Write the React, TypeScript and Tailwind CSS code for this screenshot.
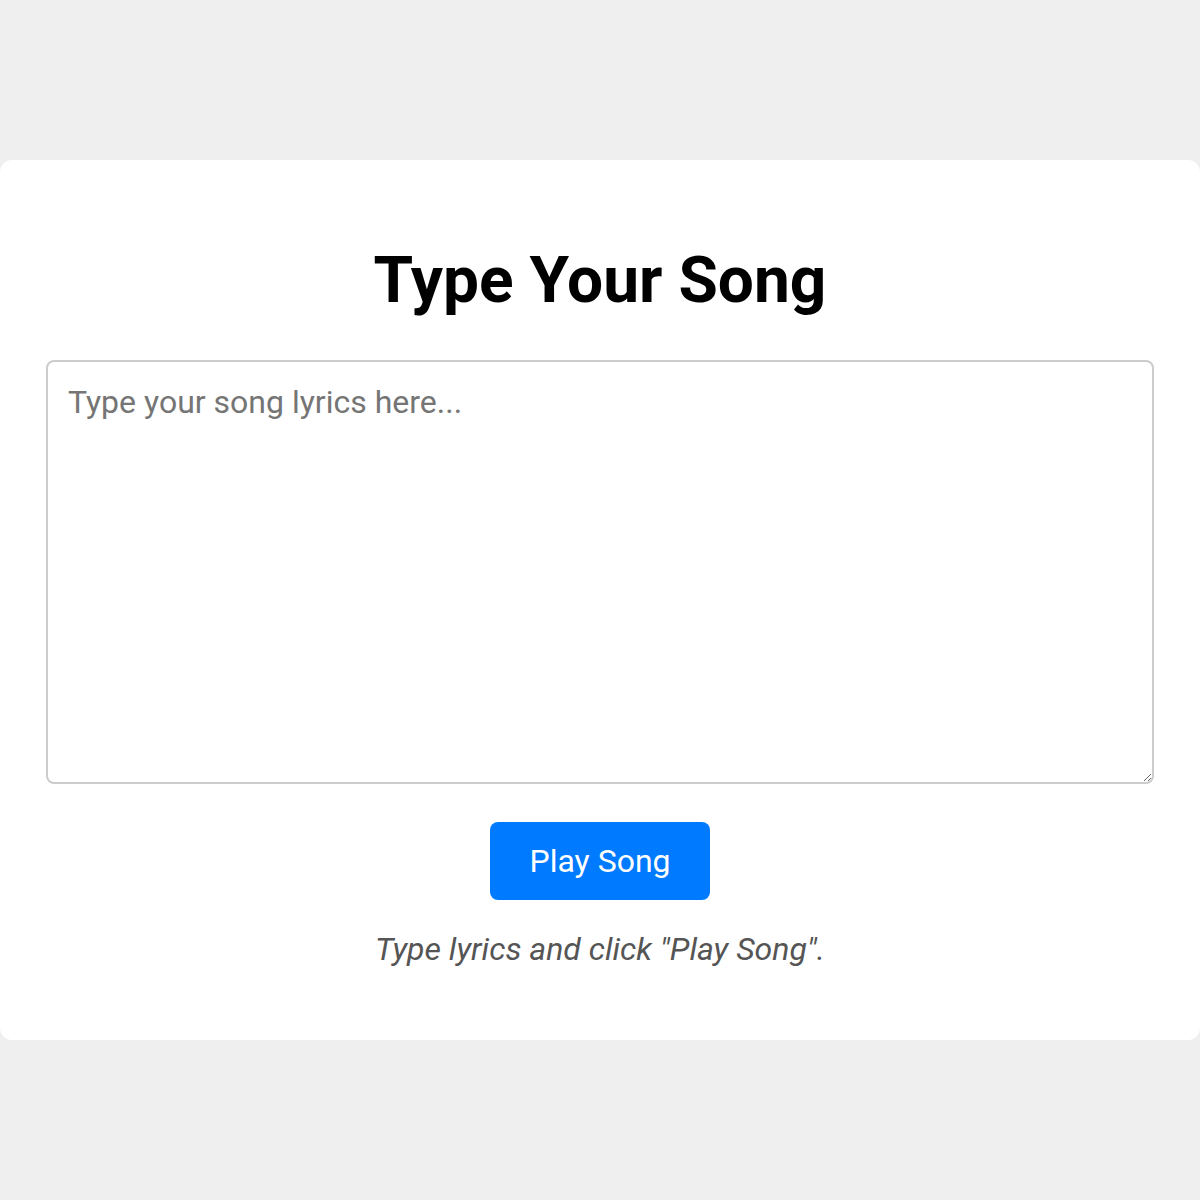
import { useState } from "react";

export default function App() {
  const [lyrics, setLyrics] = useState("");
  const [status, setStatus] = useState('Type lyrics and click "Play Song".');

  return (
    <div
      className="min-h-[1200px] bg-[#efefef] flex items-center"
      style={{ fontFamily: "Roboto, 'Liberation Sans', sans-serif" }}
    >
      <div className="w-full bg-white rounded-[12px] px-[46px] pt-[40px] pb-[40px] flex flex-col items-center">
        <h1 className="text-[64px] leading-[75px] font-bold text-black mt-[43px] mb-[42px]">
          Type Your Song
        </h1>

        <textarea
          value={lyrics}
          onChange={(e) => setLyrics(e.target.value)}
          placeholder="Type your song lyrics here..."
          className="w-full h-[424px] border-2 border-[#cccccc] rounded-[8px] px-[20px] py-[20px] text-[32px] leading-[40px] text-black placeholder:text-[#757575] outline-none"
          style={{ fontFamily: "Roboto, 'Liberation Sans', sans-serif" }}
        />

        <button
          onClick={() => setStatus(lyrics ? "Playing..." : 'Type lyrics and click "Play Song".')}
          className="mt-[38px] w-[220px] h-[78px] bg-[#007bff] text-white text-[32px] rounded-[8px] flex items-center justify-center"
        >
          Play Song
        </button>

        <p className="mt-[30px] mb-[32px] text-[32px] leading-[38px] italic text-[#555555]">
          {status}
        </p>
      </div>
    </div>
  );
}
